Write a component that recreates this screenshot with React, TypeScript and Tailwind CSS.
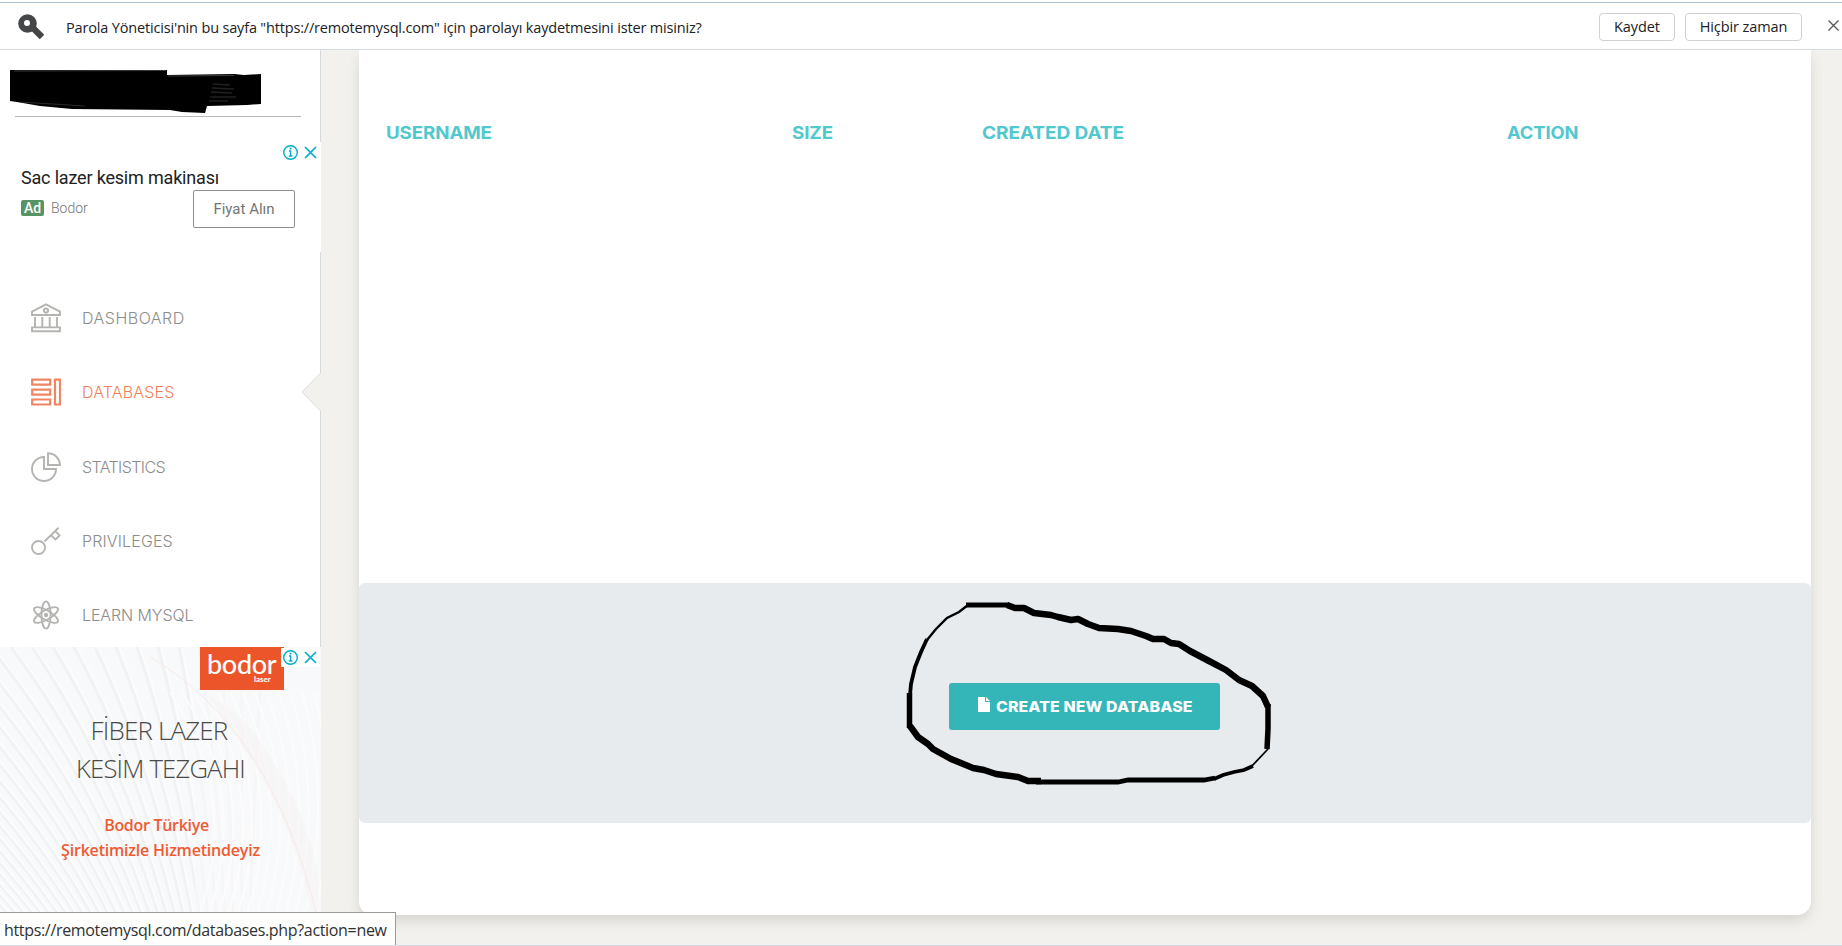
import React from 'react';
import classNames from 'clsx';

type NavItem = {
  label: string;
  icon: React.ReactNode;
  spacing: string;
  active?: boolean;
};

const DashboardIcon = () => (
  <svg width="30" height="30" viewBox="0 0 30 30" fill="none" stroke="currentColor" strokeWidth="1.9">
    <path d="M1 12V8.7L15 1.4L29 8.7V12Z" />
    <circle cx="15" cy="7.6" r="2.1" />
    <path d="M4 14v10M11.3 14v10M18.7 14v10M26 14v10" />
    <path d="M1 24.4h28v3.8H1Z" />
  </svg>
);

const DatabasesIcon = () => (
  <svg width="30" height="28" viewBox="0 0 30 28" fill="none" stroke="currentColor" strokeWidth="2.2">
    <path d="M1.2 1.7h18v5H1.2ZM1.2 11.7h18v5H1.2ZM1.2 21.5h18v5H1.2ZM24 1.7h5v24.8h-5Z" />
  </svg>
);

const StatisticsIcon = () => (
  <svg width="30" height="30" viewBox="0 0 30 30" fill="none" stroke="currentColor" strokeWidth="1.9">
    <path d="M13 5A12 12 0 1 0 25 17H13Z" />
    <path d="M17 1.3A12 12 0 0 1 29 13H17Z" />
  </svg>
);

const PrivilegesIcon = () => (
  <svg width="30" height="30" viewBox="0 0 30 30" fill="none" stroke="currentColor" strokeWidth="1.9">
    <circle cx="7.5" cy="21.5" r="6.5" />
    <path d="M13.5 15.5L27.5 1.8M20 9.2L24.5 13.5L28.6 9.4L24 5" />
  </svg>
);

const LearnIcon = () => (
  <svg width="30" height="30" viewBox="0 0 30 30" fill="none" stroke="currentColor" strokeWidth="1.9">
    <ellipse cx="15" cy="15" rx="4.6" ry="13.6" />
    <ellipse cx="15" cy="15" rx="4.6" ry="13.6" transform="rotate(60 15 15)" />
    <ellipse cx="15" cy="15" rx="4.6" ry="13.6" transform="rotate(120 15 15)" />
    <circle cx="15" cy="15" r="2.2" fill="currentColor" stroke="none" />
  </svg>
);

const navItems: NavItem[] = [
  { label: 'DASHBOARD', icon: <DashboardIcon />, spacing: 'tracking-[0.5px]' },
  { label: 'DATABASES', icon: <DatabasesIcon />, spacing: 'tracking-[0.17px]', active: true },
  { label: 'STATISTICS', icon: <StatisticsIcon />, spacing: 'tracking-[-0.6px]' },
  { label: 'PRIVILEGES', icon: <PrivilegesIcon />, spacing: 'tracking-[0.14px]' },
  { label: 'LEARN MYSQL', icon: <LearnIcon />, spacing: 'tracking-[-0.1px]' },
];

const AdChoices = () => (
  <svg width="39" height="19" viewBox="0 0 39 19" fill="none" stroke="#00aecd" strokeWidth="1.4">
    <path d="M0 0h39v19H0Z" fill="#fff" stroke="none" />
    <circle cx="9.5" cy="9.5" r="6.8" />
    <path d="M8 8h1.6v5M7.8 13h3.6" />
    <path d="M9.5 4.7v1.8" strokeWidth="1.8" />
    <path d="M24 4l11 11M35 4L24 15" strokeWidth="1.7" />
  </svg>
);

const PasswordBar = () => (
  <header className="flex h-[50px] shrink-0 items-center border-b border-[#d5dbe0] bg-white pl-[18px] font-['Open_Sans',sans-serif] text-[14.5px] text-[#202124]">
    <svg width="26" height="26" viewBox="0 0 26 26" className="mt-1">
      <path d="M12.5 11.5L24 23" stroke="#444648" strokeWidth="6.4" />
      <circle cx="9.5" cy="9.5" r="9.3" fill="#444648" />
      <circle cx="9" cy="9" r="3" fill="#fff" />
    </svg>
    <p className="ml-[22px] mt-[6px] whitespace-nowrap tracking-[-0.17px]">
      Parola Yöneticisi'nin bu sayfa "https://remotemysql.com" için parolayı kaydetmesini ister misiniz?
    </p>
    <div className="ml-auto mt-1 flex items-center gap-[10px]">
      <button className="h-[28px] w-[76px] rounded border border-[#cfd2d4] text-center tracking-[-0.1px]">Kaydet</button>
      <button className="h-[28px] w-[117px] whitespace-nowrap rounded border border-[#cfd2d4] text-center tracking-[-0.1px]">
        Hiçbir zaman
      </button>
    </div>
    <svg width="11" height="11" viewBox="0 0 11 11" className="ml-[26px] mr-[3px] mt-px" stroke="#55585b" strokeWidth="1.3">
      <path d="M0.5 0.5l10 10M10.5 0.5l-10 10" />
    </svg>
  </header>
);

const TextAd = () => (
  <div className="relative mt-[25px] h-[110px] w-[321px] bg-white pl-[21px] font-[Roboto,sans-serif]">
    <div className="absolute right-[1px] top-[1px]">
      <AdChoices />
    </div>
    <p className="pt-[24px] text-[18px] leading-6 tracking-[-0.18px] text-[#212121]">Sac lazer kesim makinası</p>
    <div className="flex">
      <div className="mt-[10px] flex h-4 items-center">
        <span className="flex h-4 w-[23px] items-center justify-center rounded-[2px] bg-[#569466] text-[14px] font-medium text-white">
          Ad
        </span>
        <span className="ml-[7px] text-[14px] font-light text-[#777]">Bodor</span>
      </div>
      <button className="ml-auto mr-[26px] h-[38px] w-[102px] rounded-[2px] border border-[#8e8e8e] text-[15px] text-[#757575]">
        Fiyat Alın
      </button>
    </div>
  </div>
);

// diagonal ribs sweeping down from the left and straightening towards the bottom
const ribs = Array.from({ length: 34 }, (_, i) => {
  const start = i * 21 - 430;
  const end = start * 0.4 + 145;
  return { start, end, mid: start + (end - start) * 0.62 };
});
const fans = Array.from({ length: 13 }, (_, i) => i * 12);

const BannerArt = () => (
  <svg width="321" height="265" viewBox="0 0 321 265" fill="none" className="absolute inset-0">
    <path d="M0 0h321v265H0Z" fill="#f8f9fa" />
    {ribs.map((rib) => (
      <g key={rib.start}>
        <path d={`M${rib.start} 0Q${rib.mid} 115 ${rib.end} 265`} stroke="#f1f2f3" strokeWidth="3" />
        <path d={`M${rib.start + 3} 0Q${rib.mid + 3} 115 ${rib.end + 2} 265`} stroke="#fcfcfd" strokeWidth="2" />
      </g>
    ))}
    <path d="M195 40h126v225H195Z" fill="#f8f9fa" fillOpacity="0.6" />
    {fans.map((x) => (
      <path key={x} d={`M${170 + x} 45Q${240 + x * 0.7} 150 ${200 + x * 0.8} 265`} stroke="#fcfcfd" strokeWidth="2" />
    ))}
    <path d="M205 48Q245 60 285 135T318 265L311 265Q290 150 205 48Z" fill="#f7f3f3" fillOpacity="0.6" />
    <path d="M150 10Q270 80 316 265" stroke="#f8e9e7" />
  </svg>
);

const BannerAd = () => (
  <div className="relative h-[298px] w-[321px] overflow-hidden bg-[#f7f7f8] font-['Open_Sans',sans-serif]">
    <BannerArt />
    <div className="absolute left-[200px] top-0 flex h-[43px] w-[84px] flex-col bg-[#eb5529] pl-[7px] pt-[3px] font-[Lato,sans-serif] text-white">
      <p className="text-[27px] font-medium leading-[27px] tracking-[-0.3px]">bodor</p>
      <p className="-mt-[2px] ml-[47px] text-[8px] font-bold leading-[8px]">laser</p>
    </div>
    <div className="absolute right-[1px] top-[1px]">
      <AdChoices />
    </div>
    <div className="relative pt-[64px] text-center text-[26px] font-light leading-[38px] text-[#4a4a4a]">
      <p className="-ml-[3px] origin-center tracking-[-0.85px]">FİBER LAZER</p>
      <p className="origin-center scale-x-[0.985] tracking-[-0.8px]">KESİM TEZGAHI</p>
    </div>
    <div className="relative mt-[25px] text-center text-[16px] font-semibold leading-[26px] text-[#ee5b33]">
      <p className="-ml-[8px] tracking-[-0.3px]">Bodor Türkiye</p>
      <p className="-mt-px tracking-[-0.2px]">Şirketimizle Hizmetindeyiz</p>
    </div>
  </div>
);

const Sidebar = () => (
  <aside className="relative w-[321px] shrink-0 border-r border-[#d6dadc] bg-white">
    <div className="ml-[15px] h-[67px] w-[286px] border-b border-[#b8b8b8]">
      <svg width="252" height="44" viewBox="10 70 252 44" className="-ml-[5px] translate-y-[20px]">
        <path d="M10 70H167V75L234 74L244 75L261 74V104L247 105L207 106L205 113L182 112L170 110L72 109L40 106L17 102L10 101Z" fill="#000" />
        <path d="M14 71L166 70.5M168 76L234 75.5" stroke="#3a3d3e" />
        <path d="M213 84L230 85M212 88L234 89M211 92L232 93M210 97L236 97M209 101L228 101" stroke="#1f2122" strokeWidth="1.6" />
        <path d="M20 102L85 106" stroke="#292c2d" />
      </svg>
    </div>
    <TextAd />
    <nav className="mt-[29px] h-[366px]">
      {navItems.map((item) => (
        <div
          key={item.label}
          className={classNames('relative flex h-[74.3px] items-center', item.active ? 'text-[#f08661]' : 'text-[#b4b4b1]')}
        >
          <div className="ml-[31px] w-[51px]">{item.icon}</div>
          <span
            className={classNames(
              'font-[Inter,sans-serif] text-[16px] font-light',
              item.spacing,
              item.active ? 'text-[#f07f58]' : 'text-[#8c8c88]'
            )}
          >
            {item.label}
          </span>
          {item.active && (
            <svg width="20" height="38" viewBox="0 0 20 38" className="absolute right-[-1px] top-[18px]">
              <path d="M20 0L1 19L20 38Z" fill="#f2f1ed" />
              <path d="M19.5 0L1 19L19.5 38" fill="none" stroke="#d9dcdd" />
            </svg>
          )}
        </div>
      ))}
    </nav>
    <BannerAd />
  </aside>
);

const PenCircle = () => (
  <svg width="366" height="184" viewBox="0 0 366 184" fill="none" stroke="#000" className="absolute left-[547px] top-[18px]">
    <path d="M62 4L53 11L41 17L30 28L21 39" strokeWidth="2.4" />
    <path d="M21 38L15 51L9 66L5 83L4 94" strokeWidth="3.8" />
    <path d="M3.5 92V127" strokeWidth="5.5" />
    <path d="M60 4H103" strokeWidth="5" />
    <path
      d="M101 4L109 7H118L128 12L145 14L152 16L165 19L172 18L182 23L193 27L212 28L225 30L240 35L247 38L258 38L265 42L273 43L284 50L303 60L320 69L333 79L346 85L357 95L362 106"
      strokeWidth="6.5"
      strokeLinejoin="round"
    />
    <path d="M362 103V128L361 148" strokeWidth="5.5" />
    <path d="M362 148L345 166" strokeWidth="1.8" />
    <path d="M347 165L338 169L328 171L317 174L308 178" strokeWidth="3.8" />
    <path d="M309 177L298 179H222L212 181H130" strokeWidth="4.8" />
    <path
      d="M4 125L12 136L22 143L27 148L45 158L50 160L67 167L78 169L90 173L112 176L122 180H135"
      strokeWidth="6.5"
      strokeLinejoin="round"
    />
  </svg>
);

const DatabasesCard = () => (
  <main className="ml-[38px] flex h-[865px] w-[1452px] shrink-0 flex-col rounded-b-[14px] bg-white shadow-[0_6px_14px_-2px_rgba(80,75,60,0.2)]">
    <div className="flex h-[533px] pl-[27px] pt-[70px] font-[Inter,sans-serif] text-[17.5px] font-bold leading-[26px] text-[#51c8cd]">
      <p className="w-[406px] origin-left scale-x-[1.07] tracking-[-0.1px]">USERNAME</p>
      <p className="w-[190px] origin-left scale-x-[1.07] tracking-[-0.1px]">SIZE</p>
      <p className="w-[525px] origin-left scale-x-[1.09] tracking-[-0.1px]">CREATED DATE</p>
      <p className="origin-left scale-x-[1.05] tracking-[-0.1px]">ACTION</p>
    </div>
    <div className="relative flex h-[240px] items-start rounded-[6px] bg-[#e7ebee] pl-[590px] pt-[100px]">
      <button className="flex h-[47px] w-[271px] items-center rounded-[3px] bg-[#34b5b8] pl-[29px] font-[Inter,sans-serif] text-[14.5px] font-extrabold text-white">
        <svg width="12" height="15" viewBox="0 0 12 15" className="-mt-1 mr-[6px]">
          <path d="M0 0h7v5h5v10H0Z" fill="#fff" />
          <path d="M8 0l4 4H8Z" fill="#fff" />
        </svg>
        <span className="origin-left scale-x-[1.095] whitespace-nowrap tracking-[0.1px]">CREATE NEW DATABASE</span>
      </button>
      <PenCircle />
    </div>
  </main>
);

const App = () => {
  return (
    <div className="relative flex h-[946px] w-[1842px] flex-col overflow-hidden bg-[#f2f1ed]">
      <div className="absolute inset-x-0 top-[2px] h-px bg-[#b3c3d1]" />
      <PasswordBar />
      <div className="flex min-h-0 flex-1 overflow-hidden">
        <Sidebar />
        <DatabasesCard />
      </div>
      <div className="absolute inset-x-0 bottom-0 h-px bg-[#d8d9e2]" />
      <div className="absolute bottom-px left-0 flex h-[33px] w-[396px] items-center whitespace-nowrap border-r border-t border-[#9b9b9b] bg-[#fefefd] pl-[4px] pt-[2px] font-['Open_Sans',sans-serif] text-[16px] tracking-[-0.33px] text-[#303030]">
        https://remotemysql.com/databases.php?action=new
      </div>
    </div>
  );
};

export default App;
